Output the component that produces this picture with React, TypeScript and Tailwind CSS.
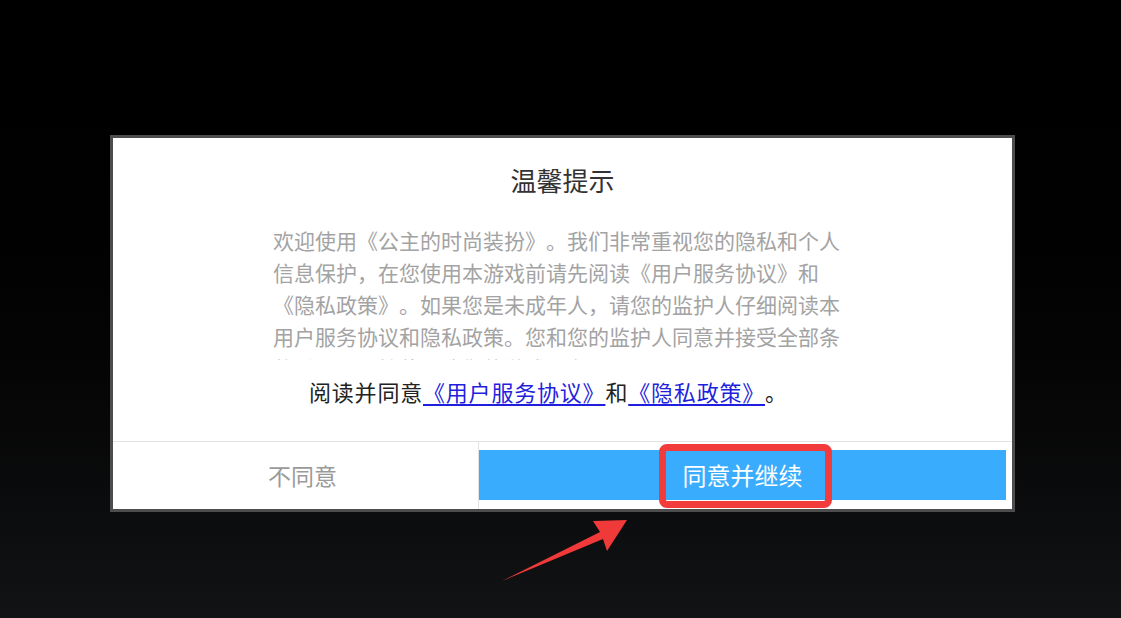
import React from "react";

const bodyLines = [
  { text: "欢迎使用《公主的时尚装扮》。我们非常重视您的隐私和个人", full: true },
  { text: "信息保护，在您使用本游戏前请先阅读《用户服务协议》和", full: false },
  { text: "《隐私政策》。如果您是未成年人，请您的监护人仔细阅读本", full: true },
  { text: "用户服务协议和隐私政策。您和您的监护人同意并接受全部条", full: true },
  { text: "款后，再开始使用我们的游戏服务。", full: false },
];

export default function App() {
  return (
    <div className="relative w-[1121px] h-[618px] overflow-hidden bg-linear-to-b from-black via-[#030303] to-[#121315] font-['Noto_Sans_CJK_SC',sans-serif] [text-spacing-trim:space-all]">
      <div className="pt-[135px] pl-[110px]">
        <div className="w-[905px] h-[377px] border-[3px] border-[#4d4d4d] bg-white flex flex-col">
          <h1 className="pt-[26px] text-center text-[26px] leading-[32px] text-[#333]">温馨提示</h1>

          <div className="mt-[28px] h-[136px] overflow-hidden pl-[160px]">
            {bodyLines.map((line, i) => (
              <p
                key={i}
                className={`w-[567px] text-[21px] leading-[32px] text-[#a3a3a3] whitespace-nowrap ${
                  line.full ? "text-justify [text-align-last:justify]" : ""
                }`}
              >
                {line.text}
              </p>
            ))}
          </div>

          <p className="mt-[15px] pl-[196px] text-[22px] leading-[32px] tracking-[0.8px] text-[#222] whitespace-nowrap">
            <span>阅读并同意</span>
            <a className="text-[#1f1fdd] underline underline-offset-[3px]">《用户服务协议》</a>
            <span>和</span>
            <a className="text-[#1f1fdd] underline underline-offset-[3px]">《隐私政策》</a>
            <span>。</span>
          </p>

          <div className="mt-auto h-[68px] border-t border-[#e3e3e3] flex">
            <button className="w-[366px] border-r border-[#e3e3e3] pl-[14px] text-[23px] text-[#9a9a9a]">
              不同意
            </button>
            <div className="flex-1 pt-[8px] pb-[9px] pr-[6px]">
              <button className="w-full h-full bg-[#3aacfd] text-white text-[24px]">同意并继续</button>
            </div>
          </div>
        </div>
      </div>

      {/* annotation: red highlight box */}
      <div className="absolute left-[659px] top-[444px] w-[173px] h-[64px] border-[7px] border-[#f23b3b] rounded-[8px]" />

      {/* annotation: red arrow */}
      <svg className="absolute left-0 top-0" width="1121" height="618" viewBox="0 0 1121 618">
        <polygon
          points="502,581 600,532 593,521 627,520 607,551 603,539"
          fill="#f03a3a"
        />
      </svg>
    </div>
  );
}
